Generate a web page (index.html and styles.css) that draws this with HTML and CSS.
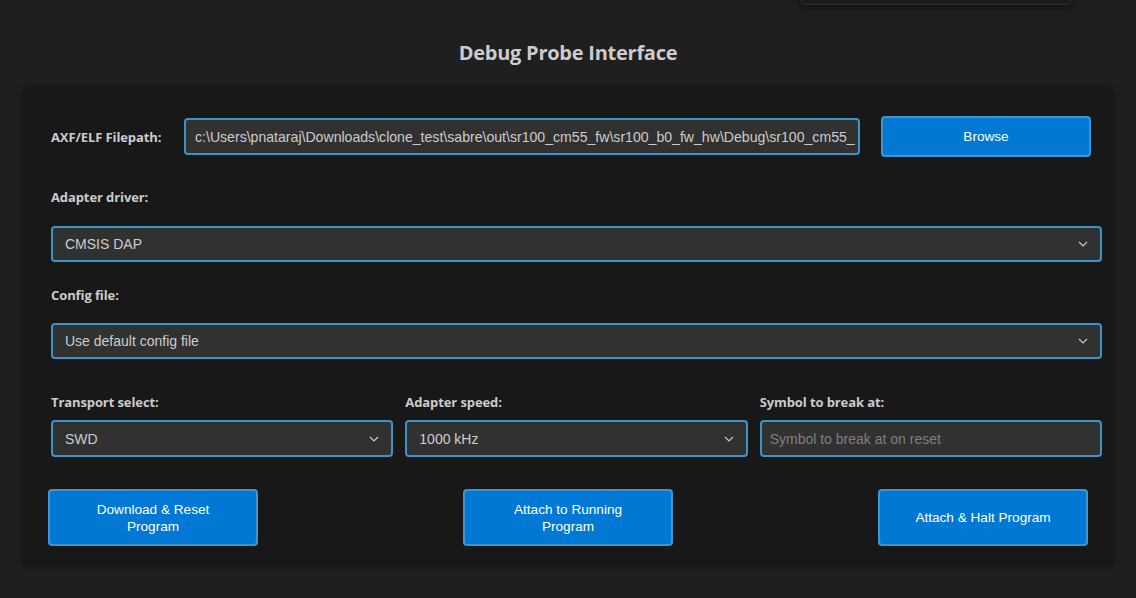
FILE: index.html
```html
<!DOCTYPE html>
<html lang="en">
<head>
<meta charset="utf-8">
<title>Debug Probe Interface</title>
<link rel="stylesheet" href="styles.css">
</head>
<body>
<div class="top-overlay"></div>
<h1 class="title">Debug Probe Interface</h1>
<main class="panel">
  <div class="file-row">
    <label class="label file-label" for="elf">AXF/ELF Filepath:</label>
    <div class="input file-input" id="elf">c:\Users\pnataraj\Downloads\clone_test\sabre\out\sr100_cm55_fw\sr100_b0_fw_hw\Debug\sr100_cm55_</div>
    <button class="btn browse">Browse</button>
  </div>

  <div class="label block-label label-driver">Adapter driver:</div>
  <div class="input select">CMSIS DAP<svg class="chev" viewBox="0 0 10 6" width="10" height="6"><path d="M1 1l4 4 4-4" fill="none" stroke="#c8c8c8" stroke-width="1.2"/></svg></div>

  <div class="label block-label label-config">Config file:</div>
  <div class="input select">Use default config file<svg class="chev" viewBox="0 0 10 6" width="10" height="6"><path d="M1 1l4 4 4-4" fill="none" stroke="#c8c8c8" stroke-width="1.2"/></svg></div>

  <div class="triple">
    <div class="field">
      <div class="label">Transport select:</div>
      <div class="input select tall">SWD<svg class="chev" viewBox="0 0 10 6" width="10" height="6"><path d="M1 1l4 4 4-4" fill="none" stroke="#c8c8c8" stroke-width="1.2"/></svg></div>
    </div>
    <div class="field">
      <div class="label">Adapter speed:</div>
      <div class="input select tall">1000 kHz<svg class="chev" viewBox="0 0 10 6" width="10" height="6"><path d="M1 1l4 4 4-4" fill="none" stroke="#c8c8c8" stroke-width="1.2"/></svg></div>
    </div>
    <div class="field">
      <div class="label">Symbol to break at:</div>
      <div class="input tall placeholder">Symbol to break at on reset</div>
    </div>
  </div>

  <div class="actions">
    <button class="btn action">Download &amp; Reset<br>Program</button>
    <button class="btn action">Attach to Running<br>Program</button>
    <button class="btn action">Attach &amp; Halt Program</button>
  </div>
</main>
</body>
</html>
```

FILE: styles.css
```css
html, body {
  margin: 0;
  padding: 0;
  background: #1f1f1f;
  height: 100%;
  overflow: hidden;
}

body {
  position: relative;
  padding-top: 41px;
  box-sizing: border-box;
  font-family: "Liberation Sans", Arial, sans-serif;
  color: #cccccc;
}

.top-overlay {
  position: absolute;
  left: 800px;
  top: -30px;
  width: 271px;
  height: 33px;
  background: #1b1b1b;
  border: 1px solid #2e2e2e;
  border-radius: 6px;
  box-shadow: 0 2px 6px rgba(0, 0, 0, 0.5);
}

.title {
  margin: 0 0 22px;
  text-align: center;
  font-family: "Open Sans", "Noto Sans", sans-serif;
  font-size: 20px;
  line-height: 24px;
  font-weight: 700;
  color: #cccccc;
  letter-spacing: -0.25px;
}

.panel {
  margin-left: 22px;
  width: 1092px;
  box-sizing: border-box;
  padding: 29px 12px 20px 29px;
  background: #181818;
  border-radius: 8px;
  box-shadow: 0 0 6px rgba(0, 0, 0, 0.35);
}

.label {
  font-family: "Open Sans", "Noto Sans", sans-serif;
  font-weight: 700;
  font-size: 13px;
  line-height: 18px;
  color: #cccccc;
  letter-spacing: -0.1px;
}

.file-row {
  display: flex;
  align-items: center;
  margin-right: 11px;
}

.file-label {
  flex: none;
  width: 133px;
}

.input {
  box-sizing: border-box;
  background: #313131;
  border: 2px solid #3d93c9;
  border-radius: 4px;
  font-size: 14px;
  color: #cccccc;
  display: flex;
  align-items: center;
  white-space: nowrap;
  overflow: hidden;
}

.file-input {
  flex: 1;
  min-width: 0;
  height: 37px;
  padding: 0 2px 0 9px;
  font-size: 14.1px;
}

.btn {
  box-sizing: border-box;
  background: #0078d4;
  border: 2px solid #3e95d3;
  border-radius: 4px;
  color: #ffffff;
  font-family: "Liberation Sans", Arial, sans-serif;
  font-size: 13.6px;
  line-height: 17px;
  padding: 0;
}

.browse {
  flex: none;
  width: 210px;
  height: 41px;
  margin-left: 21px;
}

.block-label {
  margin-top: 31px;
}

.label-config {
  margin-top: 24px;
}

.select {
  justify-content: space-between;
  height: 36px;
  padding: 0 12px 0 12px;
  margin-top: 20px;
}

.label-config + .select {
  margin-top: 19px;
}

.chev {
  flex: none;
}

.triple {
  margin-top: 34px;
  display: grid;
  grid-template-columns: 1fr 1fr 1fr;
  column-gap: 12px;
}

.field .input {
  margin-top: 9px;
}

.tall {
  height: 37px;
}

.placeholder {
  padding: 0 8px;
  color: #7f7f7f;
}

.actions {
  margin: 32px 14px 0 -3px;
  display: flex;
  justify-content: space-between;
}

.action {
  width: 210px;
  height: 57px;
}
```
